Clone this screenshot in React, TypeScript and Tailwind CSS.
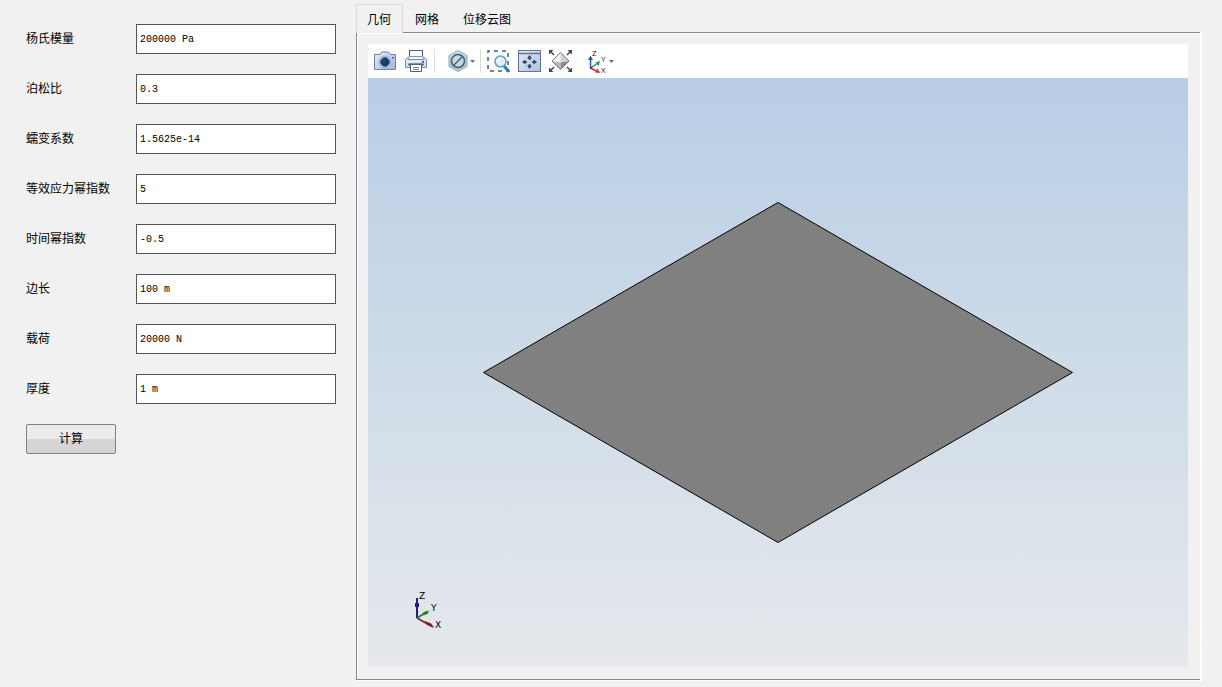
import React, { useState } from 'react';

const fields = [
  { id: 'young', label: '杨氏模量', value: '200000 Pa' },
  { id: 'poisson', label: '泊松比', value: '0.3' },
  { id: 'creep', label: '蠕变系数', value: '1.5625e-14' },
  { id: 'stress-exp', label: '等效应力幂指数', value: '5' },
  { id: 'time-exp', label: '时间幂指数', value: '-0.5' },
  { id: 'side', label: '边长', value: '100 m' },
  { id: 'load', label: '载荷', value: '20000 N' },
  { id: 'thickness', label: '厚度', value: '1 m' },
];

const tabs = ['几何', '网格', '位移云图'];

function CameraIcon() {
  return (
    <svg width="24" height="24" viewBox="0 0 24 24">
      <defs>
        <linearGradient id="cam" x1="0" y1="0" x2="1" y2="1">
          <stop offset="0" stopColor="#e6eefa" />
          <stop offset="1" stopColor="#9fb6dc" />
        </linearGradient>
      </defs>
      <path d="M1.500 5.500h5.500l1.500-2.500h7l1.500 2.500h5.500v15h-21z" fill="url(#cam)" stroke="#6d80a8" strokeLinejoin="round" />
      <circle cx="12" cy="13" r="6" fill="#dbe6f6" stroke="#93a5c8" />
      <circle cx="12" cy="13" r="4.500" fill="#1d3767" stroke="#48659a" />
      <circle cx="11" cy="12" r="1.200" fill="#33528c" />
      <rect x="19" y="8" width="1.500" height="1.500" fill="#2c477b" />
    </svg>
  );
}

function PrinterIcon() {
  return (
    <svg width="24" height="24" viewBox="0 0 24 24">
      <rect x="5.500" y="1.500" width="13" height="7" fill="#fff" stroke="#4c5f87" />
      <path d="M3.500 8.500h17l2 2v8h-21v-8z" fill="#d5dfee" stroke="#7c8cab" />
      <path d="M5 7.500h14l1 3H4z" fill="#f3f6fb" stroke="#8291ae" />
      <path d="M2 12.500h20" stroke="#f3f6fb" />
      <rect x="18" y="12" width="2" height="1.500" fill="#33486f" />
      <path d="M4.500 15.500h15" stroke="#2f456e" strokeWidth="2" />
      <path d="M6.500 15.500h11v7h-11z" fill="#fff" stroke="#4c5f87" />
      <path d="M9 18.500h6M9 20.500h6" stroke="#6e7f9f" />
    </svg>
  );
}

function HexIcon() {
  return (
    <svg width="24" height="24" viewBox="0 0 24 24">
      <path d="M12 1.500l9 5v11l-9 5-9-5v-11z" fill="#b3c9cd" stroke="#91aeb5" />
      <path d="M12 2l8.500 5L12 12 3.500 7z" fill="#cadade" />
      <circle cx="12" cy="12" r="6.500" fill="#c8d9df" stroke="#3f6079" strokeWidth="1.500" />
      <path d="M7.500 16.500l9-9" stroke="#3f6079" strokeWidth="1.500" />
    </svg>
  );
}

function ZoomBoxIcon() {
  return (
    <svg width="24" height="24" viewBox="0 0 24 24">
      <rect x="2" y="2" width="20" height="20" fill="none" stroke="#4a5a80" strokeWidth="1.500" strokeDasharray="4 4" strokeDashoffset="2" />
      <path d="M18.500 17.500l4 4.500" stroke="#2f7fb4" strokeWidth="3" strokeLinecap="round" />
      <circle cx="14.500" cy="12.500" r="5.500" fill="#e0eff9" stroke="#5d9fca" strokeWidth="1.500" />
      <path d="M11.500 12.500a3 3 0 0 1 3-3" fill="none" stroke="#fff" strokeWidth="1.500" />
    </svg>
  );
}

function FitIcon() {
  return (
    <svg width="24" height="24" viewBox="0 0 24 24">
      <defs>
        <linearGradient id="fit" x1="0" y1="0" x2="1" y2="1">
          <stop offset="0" stopColor="#e3eaf4" />
          <stop offset="1" stopColor="#b3c2d9" />
        </linearGradient>
      </defs>
      <rect x="1.500" y="1.500" width="22" height="21" fill="url(#fit)" stroke="#627399" />
      <path d="M2 4.500h21" stroke="#627399" strokeWidth="1.500" />
      <path d="M12.500 9v2M12.500 15v2M8 13h2M15 13h2" stroke="#2b406c" strokeWidth="1.500" />
      <path d="M12.500 6l2.500 3.500h-5zM12.500 20l2.500-3.500h-5zM5 13l3.500-2.500v5zM20 13l-3.500-2.500v5z" fill="#2b406c" />
    </svg>
  );
}

function DiamondIcon() {
  return (
    <svg width="24" height="24" viewBox="0 0 24 24">
      <path d="M2 2l4 4M23 2l-4 4M2 22l4-4M23 22l-4-4" stroke="#34476f" strokeWidth="1.500" />
      <path d="M1 1h4.500L1 5.500zM24 1h-4.500L24 5.500zM1 23h4.500L1 18.500zM24 23h-4.500l4.500-4.500z" fill="#34476f" />
      <path d="M12.500 3v10.500L3.500 12z" fill="#eeefef" />
      <path d="M12.500 3l9 9-9 1.500z" fill="#cfd1d3" />
      <path d="M3.500 12l9 1.500V21z" fill="#b6babd" />
      <path d="M12.500 13.500l9-1.500-9 9z" fill="#858b90" />
      <path d="M12.500 3.500L21 12l-8.500 8.500L4 12z" fill="none" stroke="#757b82" />
    </svg>
  );
}

function AxesIcon() {
  return (
    <svg width="24" height="28" viewBox="-1 -3 24 28" fontFamily="Open Sans, sans-serif" fontSize="8">
      <path d="M4.500 18V9" stroke="#2857a8" strokeWidth="1.500" />
      <path d="M4.500 5.500L7 10H2z" fill="#2857a8" />
      <path d="M4.500 18l6-4" stroke="#209151" strokeWidth="1.500" />
      <path d="M14 11l-1.500 5-3-3.500z" fill="#209151" />
      <path d="M4.500 18l6 3" stroke="#dd2b37" strokeWidth="1.500" />
      <path d="M14 23l-5-.500 2.500-4z" fill="#dd2b37" />
      <rect x="4" y="17" width="1.500" height="1.500" fill="#222" />
      <text x="6" y="6" fill="#222">Z</text>
      <text x="15" y="12" fill="#222">Y</text>
      <text x="15" y="23" fill="#222">X</text>
    </svg>
  );
}

function Caret() {
  return (
    <svg width="5" height="3" viewBox="0 0 5 3">
      <path d="M0 0h5L2.500 3z" fill="#707070" />
    </svg>
  );
}

function ToolButton({ title, menu, children }: { title: string; menu?: boolean; children: React.ReactNode }) {
  return (
    <button type="button" aria-label={title} className="flex h-6 shrink-0 items-center hover:bg-blue-50">
      {children}
      {menu && <Caret />}
    </button>
  );
}

function Separator() {
  return <div className="h-6 w-px shrink-0 bg-[#dcdcdc]" />;
}

function Toolbar() {
  return (
    <div className="flex h-[34px] shrink-0 items-center gap-[5px] bg-white px-[5px]">
      <div className="flex gap-[7px] pr-px">
        <ToolButton title="截图"><CameraIcon /></ToolButton>
        <ToolButton title="打印"><PrinterIcon /></ToolButton>
      </div>
      <Separator />
      <div className="pl-[6px]">
        <ToolButton title="显示" menu><HexIcon /></ToolButton>
      </div>
      <Separator />
      <div className="flex gap-[7px]">
        <ToolButton title="框选缩放"><ZoomBoxIcon /></ToolButton>
        <ToolButton title="适应窗口"><FitIcon /></ToolButton>
        <ToolButton title="等轴测"><DiamondIcon /></ToolButton>
      </div>
      <div className="pl-2">
        <ToolButton title="视图方向" menu><AxesIcon /></ToolButton>
      </div>
    </div>
  );
}

// orientation triad in the corner of the scene
function Triad() {
  return (
    <svg
      className="absolute bottom-9 left-[44px]"
      width="32"
      height="42"
      viewBox="0 0 32 42"
      fontFamily="DejaVu Sans, sans-serif"
      fontSize="9"
    >
      <path d="M5 29V9" stroke="#20207c" strokeWidth="2" />
      <rect x="3" y="14" width="4" height="4" fill="#20207c" />
      <path d="M5 29l8-5" stroke="#1f801f" strokeWidth="1.500" />
      <path d="M17 21.500l-1.500 3.500-5 1.500 1-3.500z" fill="#1f801f" />
      <path d="M5 29l16 9" stroke="#7c2020" strokeWidth="1.500" />
      <path d="M13 32l6 2.500 3 4-7-2.500z" fill="#7c2020" />
      <text x="7" y="10">Z</text>
      <text x="19" y="22">Y</text>
      <text x="23" y="39">X</text>
    </svg>
  );
}

function Scene() {
  return (
    <div className="relative min-h-0 flex-1 bg-linear-to-b from-[#b9cde6] via-[#cfdce8] to-[#e6e8ec]">
      <svg className="block h-full w-full" viewBox="0 0 820 589">
        <path
          d="M410 124.500L704.500 294.500L410 464.500L115.500 294.500Z"
          fill="#808080"
          stroke="#000"
        />
      </svg>
      <Triad />
    </div>
  );
}

export default function App() {
  const [active, setActive] = useState(0);

  return (
    <div className="flex h-screen bg-[#f1f1f1] font-['Liberation_Sans','Noto_Sans_CJK_SC',sans-serif] text-xs text-black">
      <form className="flex w-[356px] shrink-0 flex-col gap-5 py-6 pr-5 pl-[26px]" onSubmit={(e) => e.preventDefault()}>
        {fields.map((f) => (
          <div key={f.id} className="flex h-[30px] items-center">
            <label htmlFor={f.id} className="w-[110px] shrink-0">{f.label}</label>
            <input
              id={f.id}
              type="text"
              defaultValue={f.value}
              className="h-full min-w-0 flex-1 border border-[#555] bg-white px-[3px] font-['Liberation_Mono',monospace] text-[10px] outline-none"
            />
          </div>
        ))}
        <button
          type="submit"
          className="h-[30px] w-[90px] rounded-xs border border-[#808080] bg-linear-to-b from-[#ececec] from-50% to-[#d5d5d5] to-50%"
        >
          计算
        </button>
      </form>

      <main className="flex min-w-0 flex-1 flex-col pt-1 pr-5 pb-[6px]">
        <div role="tablist" className="flex h-7 shrink-0">
          {tabs.map((tab, i) => (
            <button
              key={tab}
              type="button"
              role="tab"
              aria-selected={i === active}
              onClick={() => setActive(i)}
              className={
                i === active
                  ? 'relative -mb-px border border-b-0 border-[#d9d9d9] bg-[#f1f1f1] pt-px pr-[11px] pl-[10px]'
                  : 'px-3 pt-[3px]'
              }
            >
              {tab}
            </button>
          ))}
        </div>
        <div className="min-h-0 flex-1 border-r-2 border-b border-white">
          <div className="flex h-full flex-col border border-r-0 border-[#868890]">
            <div className="flex min-h-0 flex-1 flex-col border-t border-l border-white pt-[10px] pr-3 pb-3 pl-[10px]">
              <Toolbar />
              <Scene />
            </div>
          </div>
        </div>
      </main>
    </div>
  );
}
